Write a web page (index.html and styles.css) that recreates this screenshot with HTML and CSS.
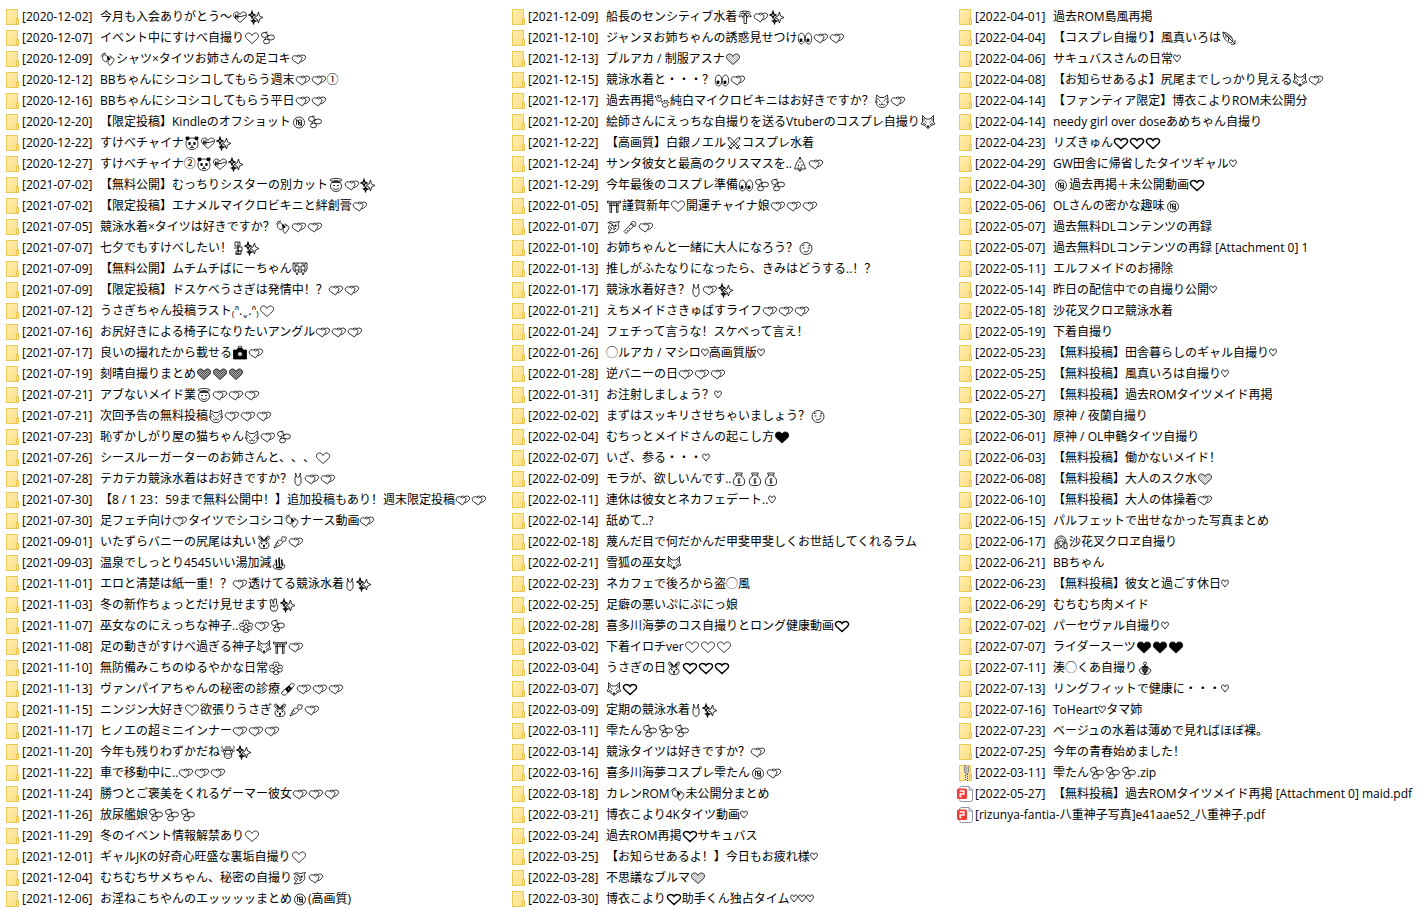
FILE: index.html
```html
<!DOCTYPE html>
<html lang="zh-CN">
<head>
    <meta charset="UTF-8">
    <meta name="viewport" content="width=device-width, initial-scale=1.0">
    <title>Files</title>
    <link rel="stylesheet" href="styles.css">
</head>
<body>
    <!-- Icon shapes used by the list -->
    <svg class="sprite" aria-hidden="true">
        <defs>
            <linearGradient id="paper" x1="0" y1="0" x2="1" y2="1">
                <stop offset="0" stop-color="#ffeeb0"/>
                <stop offset="1" stop-color="#fddf85"/>
            </linearGradient>
            <pattern id="hatch-dark" width="2" height="2" patternUnits="userSpaceOnUse">
                <rect width="2" height="2" fill="#aaa"/>
                <rect width="1" height="1" fill="#555"/>
                <rect x="1" y="1" width="1" height="1" fill="#555"/>
            </pattern>
            <pattern id="hatch-light" width="2" height="2" patternUnits="userSpaceOnUse">
                <rect width="2" height="2" fill="#eee"/>
                <rect width="1" height="1" fill="#bbb"/>
                <rect x="1" y="1" width="1" height="1" fill="#bbb"/>
            </pattern>
        </defs>

        <!-- File types -->
        <symbol id="folder" viewBox="0 0 16 16">
            <rect x="2.5" y=".5" width="11" height="15" fill="url(#paper)" stroke="#ecca58"/>
            <path d="M12.5 9.5h2v6h-2z" fill="#ffe697" stroke="#e9c450"/>
        </symbol>
        <symbol id="zip" viewBox="0 0 16 16">
            <rect x="2.5" y=".5" width="11" height="15" fill="url(#paper)" stroke="#ecca58"/>
            <path d="M12.5 9.5h2v6h-2z" fill="#ffe697" stroke="#e9c450"/>
            <rect x="8" y="0" width="3" height="16" fill="#ddd"/>
            <path d="M8.5 0v16M10.500 1v15" stroke="#555" stroke-dasharray="1 1"/>
            <path d="M7.500 1v6.500l2 2 2-2V1" fill="#bbb" stroke="#888"/>
        </symbol>
        <symbol id="pdf" viewBox="0 0 16 16">
            <path d="M2.5 3V2.5a2 2 0 0 1 2-2H12L15.500 4v9.500a2 2 0 0 1-2 2H4.500a2 2 0 0 1-2-2V13" fill="#fff" stroke="#8f97a8"/>
            <path d="M12 .5V4h3.500" fill="none" stroke="#8f97a8"/>
            <rect x="0" y="2.500" width="10" height="10.500" rx="1.500" fill="#ee3b36"/>
            <path d="M2.500 5h4.500v3H3v2.500h1.500" fill="none" stroke="#fff" stroke-width="1.300"/>
        </symbol>

        <!-- Emoji -->
        <symbol id="two-hearts" viewBox="0 0 16 16"><path d="M7.500 13 2.500 9.800C0 7.500 1.500 4.500 4.200 4.800 6 5 7 5.500 7.500 6.200 8.500 5 10.500 5.200 11 6.800 11.300 8.500 9 10.500 7.500 13ZM6 4.800C7.500 3.800 9 4 9.800 4.600 11.500 3.600 14.500 4 14.700 6.200 14.500 8.500 12 10.300 9.500 11"/></symbol>
        <symbol id="heart" viewBox="0 0 16 16"><path d="M8 13.500 2.500 8.500C0 5.500 2.500 3 4.500 3 6.500 3 7.500 4.500 8 5.500 8.500 4.500 9.500 3 11.500 3 13.500 3 16 5.500 13.500 8.500Z"/></symbol>
        <symbol id="growing-heart" viewBox="0 0 16 16"><path stroke-width="1.400" d="M8 13.500 2.500 8.500C0 5.500 2.500 3.500 4.500 3.500 6.500 3.500 7.500 4.500 8 5.500 8.500 4.500 9.500 3.500 11.500 3.500 13.500 3.500 16 5.500 13.500 8.500Z"/></symbol>
        <symbol id="dark-heart" viewBox="0 0 16 16"><path fill="url(#hatch-dark)" d="M8 13.500 2.500 8.500C0 5.500 2.500 3 4.500 3 6.500 3 7.500 4.500 8 5.500 8.500 4.500 9.500 3 11.500 3 13.500 3 16 5.500 13.500 8.500Z"/></symbol>
        <symbol id="light-heart" viewBox="0 0 16 16"><path fill="url(#hatch-light)" d="M8 13.500 2.500 8.500C0 5.500 2.500 3 4.500 3 6.500 3 7.500 4.500 8 5.500 8.500 4.500 9.500 3 11.500 3 13.500 3 16 5.500 13.500 8.500Z"/></symbol>
        <symbol id="black-heart" viewBox="0 0 16 16"><path fill="currentColor" d="M8 14 2.500 9C0 6 2 3 4.500 3 6.500 3 7.500 4 8 5 8.500 4 9.500 3 11.500 3 14 3 16 6 13.500 9Z"/></symbol>
        <symbol id="small-heart" viewBox="0 0 8 16"><path d="M4 11 .8 7.200C-.2 3.500 3.300 3 4 5.800 4.700 3 8.200 3.500 7.200 7.200Z"/></symbol>
        <symbol id="ribbon-heart" viewBox="0 0 16 16"><path d="M8 13.500 2.500 8.500C0 5.500 2.500 3 4.500 3 6.500 3 7.500 4.500 8 5.500 8.500 4.500 9.500 3 11.500 3 13.500 3 16 5.500 13.500 8.500ZM3 7.500h6L14 6M6 4.500v5.500M6 7.500 3.500 5.500v4z"/></symbol>
        <symbol id="sparkles" viewBox="0 0 16 16"><path d="M10.500 3 11.500 7 15 8.500 11.500 10 10.500 14 9 10 6 8.500 9 7Z"/><path stroke-width="1.200" d="M4 2.500 4.800 5 7 6 4.800 7 4 9 3.200 7 1 6 3.200 5ZM5.500 9.500 6 11.500 8 12 6 13 5.500 14.500 5 13 3.500 12 5 11.500Z"/></symbol>
        <symbol id="drops" viewBox="0 0 16 16"><ellipse cx="4.500" cy="5" rx="3" ry="2.500"/><ellipse cx="11" cy="7.500" rx="3.500" ry="2.500"/><ellipse cx="6.500" cy="11.500" rx="3" ry="2.300"/><path d="M4.500 2.500 7.500 2M7 6.500 9 5.500M4 10 6 8"/></symbol>
        <symbol id="feet" viewBox="0 0 16 16"><path d="M3 5C5 2.500 8 4.500 7.500 7.500 7 10 7 11.500 5 10.500 3 9.500 1.500 7.500 3 5ZM10 7C13 6 15 8 13.500 10 12 12 11.500 14.500 9.500 14 7.500 13 7.500 8 10 7Z"/><path d="M1 5.500 3 3M2.500 3 4 2.500M4 2.500l2-.5M9.500 5l2 .5"/><path stroke-width="1.800" d="M7.500 5.500 9.500 9"/></symbol>
        <symbol id="eighteen" viewBox="0 0 16 16"><circle cx="8" cy="8.500" r="5.500"/><path d="M5.500 6v5M7.500 6h3v5h-3zM7.500 8.500h3M4.500 4.500l7 8"/></symbol>
        <symbol id="panda" viewBox="0 0 16 16"><path fill="currentColor" d="M2 2h3v2.500H2ZM11 2h3v2.500h-3ZM4.800 7.500h1.500v2H4.800ZM9.700 7.500h1.500v2H9.700Z"/><path d="M8 3C3.500 3 2 6 2 9 2 13 5 14.500 8 14.500S14 13 14 9C14 6 12.500 3 8 3ZM7 11h2M8 11v1.500M6 12.500h4"/></symbol>
        <symbol id="halo" viewBox="0 0 16 16"><ellipse cx="8" cy="3" rx="6" ry="1.500"/><circle cx="8" cy="9" r="5.500"/><path d="M4 5.500h8M5 8.500h2M9 8.500h2M5 11c2 2 4 2 6 0"/></symbol>
        <symbol id="bamboo" viewBox="0 0 12 16"><path d="M6 2v13M3 2h5v4H3zM6 7h4v4H6zM2 8h4M4 11h5v3H4zM3 14h6"/></symbol>
        <symbol id="bunnies" viewBox="0 0 16 16"><path d="M2 2 4 5 6 2M10 2 12 5 14 2M3 5h4v4H3zM9 5h4v4H9zM3 9 5 14 7 9M9 9l2 5 2-5M1 2v6l1.500 3M15 2v6l-1.500 3M7 11h2M1 2h14"/></symbol>
        <symbol id="camera" viewBox="0 0 16 16"><path fill="currentColor" d="M1.500 5H5L6 3h4l1 2h3.500v9h-13Z"/><circle cx="8" cy="9" r="2.500" fill="#ccc"/><path d="M6 1l1 1.500M10 1 9 2.500M8 .5V2"/></symbol>
        <symbol id="cat" viewBox="0 0 16 16"><path d="M2.500 2 6 4.500h4L13.500 2 14 8C14 12 11.500 14.500 8 14.500S2 12 2 8ZM4 5v2M12 5v2M5 7l1.500 1.500M11 7 9.500 8.500M5 11l1.500 1L8 11l1.500 1 1.500-1M1 9h3M12 9h3M8 9.500v1"/></symbol>
        <symbol id="swimsuit" viewBox="0 0 12 16"><path d="M3.500 2 4 4.500 3 7v4c0 2 2 3.500 3 3.500s3-1.500 3-3.500V7L8 4.500 8.500 2 7.500 5.500C7 6.500 5 6.500 4.500 5.500Z"/></symbol>
        <symbol id="rabbit" viewBox="0 0 16 16"><path d="M3 2C2 4 4 7 6 7H10C12 7 14 4 13 2 11 2 9 4 8.500 7M3 2C5 2 7 4 7.500 7M6 7C4 8 3 10 3 12 4 14.500 6 14.500 8 14.500S12 14.500 13 12C13 10 12 8 10 7"/><path stroke-width="1.500" d="M5 9.500h1.500M9.500 9.500H11M7 11.500h2M8 12v1.500M4.500 3.500 7 6M11.500 3.500 9 6"/></symbol>
        <symbol id="carrot" viewBox="0 0 16 16"><path d="M2 14 5 8C7 5 10 6 10.500 8 10.500 10 7 12 2 14ZM10 6C9 3 11 1 12 3.500 14 2 15.500 4 13.500 5 15 7 12 8 10.500 7M5 8.500l2 1M4 11l1.500.5"/></symbol>
        <symbol id="hot-spring" viewBox="0 0 16 16"><path d="M4 9C1 10 1 14 8 14.500 15 14 15 10 12 9"/><path stroke-width="1.500" d="M5 11C7 9 4 7 5.500 4.500M8 11.500C10 9 6.500 6 8.500 2.500M11 11C12.500 9 9.500 7 11 4.500M5 12.500h6"/></symbol>
        <symbol id="victory" viewBox="0 0 12 16"><path d="M3 8 2 3 4 2.500 5.500 7 6 2h2.500L8.500 7c2 1 1.500 5-.5 7H4C2 12 2 10 3 8ZM3 9h3v2M6 9l2-1"/></symbol>
        <symbol id="blossom" viewBox="0 0 16 16"><circle cx="8" cy="8.500" r="2"/><path d="M5.500 6C4 2.500 7 1 8 3c1-2 4-.5 2.500 3C14 3.500 16 7 13.500 8.500c2 2-1 5-3 2.500 1 3-1 4.500-2.500 3-1.500 1.500-3.500 0-2.500-3-2 2.500-5-.5-3-2.500C0 7 2 3.500 5.500 6ZM8 4v2.500M13 8l-3 .5M3 8l3 .5M7 10.500 6 13M9 10.500l1 2.500"/></symbol>
        <symbol id="fox" viewBox="0 0 16 16"><path d="M2.500 1.500 6 5h4l3.500-3.500V8l1.500 2-3.500 1.500L8 14.500l-3.500-3L1 10l1.500-2ZM5 7.500l1.500 1M11 7.500l-1.500 1M3 9l3 2M13 9l-3 2M4 4v3M12 4v3"/><path fill="currentColor" d="M7 12h2l-1 1.500Z"/></symbol>
        <symbol id="shrine" viewBox="0 0 16 16"><path d="M1.500 3C5 4 11 4 14.500 3v2h-13ZM3 7.500h10M4 5v9.500h1.500V5M10.500 5v9.500H12V5M8 5v2.500"/></symbol>
        <symbol id="bandage" viewBox="0 0 16 16"><path d="M2 11 11 3C13 1.500 15 3 14 5L6 13.500C4 15 1 14 2 11Z"/><path fill="currentColor" d="M5.500 8 9 5l3 2.500-4 4Z"/><path stroke="#fff" d="M8 7.500l1.500 1"/></symbol>
        <symbol id="cow" viewBox="0 0 16 16"><path d="M2 2C1.500 5 3 6 5 5h6c2 1 3.500 0 3-3M1 6.500 4 8 4.500 12C5 14 6 14.500 8 14.500S11 14 11.500 12L12 8l3-1.500M4 10h8M5.500 7v1.500M10.500 7v1.500M6.500 12h.8M9 12h.8M5 3h6M3 6.500h10"/></symbol>
        <symbol id="shark" viewBox="0 0 16 16"><path d="M1.500 4C4 2 6 3 8 3.500L13.500 2.500 12 5C14 8 12 12 7 13.500L2 14 4.500 11C2 10 2 7 4 6M5 6l3 1v4M8 11l2-2M4 8l2 1-1 1.500M2 3.500l5 2"/><path fill="currentColor" d="M9 6h1.200v1.200H9Z"/></symbol>
        <symbol id="palm" viewBox="0 0 16 16"><path d="M7 6v8.500h2.500V6M8 5.500C5 3.500 2 4.500 2 8L5 6.500 5.500 8.500 8 5.500M8 5.500C11 3.500 14 4.500 14 8L11 6.500 10.500 8.500 8 5.500M8 5C6 1.500 3 2 2.500 4M8 5C10 1.500 13 2 13.500 4M5 2.500 8 2l3 .5"/></symbol>
        <symbol id="eyes" viewBox="0 0 16 16"><ellipse cx="4.500" cy="8.500" rx="3.200" ry="5.500"/><ellipse cx="11.500" cy="8.500" rx="3.200" ry="5.500"/><path fill="currentColor" d="M3 9h2v2.500H3ZM10 9h2v2.500h-2Z"/></symbol>
        <symbol id="paws" viewBox="0 0 16 16"><path d="M2.500 6.500C2.500 4 7 3.500 7.500 6 7.500 8.500 3 9 2.500 6.500ZM8.500 12C8.500 9.500 13.500 9 14 12 13.500 15 8.500 14.500 8.500 12Z"/><path stroke-width="1.500" d="M1.500 4.500V3M4 3.500V2M6.500 3.500V2M8 9.500V8M10.500 8.500V7M13 8.500V7M14.500 10V9"/></symbol>
        <symbol id="swords" viewBox="0 0 16 16"><path d="M2 2.500 4.500 3 13 12 11.500 13.500 2.500 5ZM14 2.500 11.500 3 3 12 4.500 13.500 13.500 5ZM2 10l4 4M14 10l-4 4M2 14.500l1.500-1.500M14 14.500 12.500 13"/></symbol>
        <symbol id="tree" viewBox="0 0 16 16"><path d="M8 2 5 6 3.500 10 2.500 13h11L12.500 10 11 6ZM7 13v2h2v-2"/><path stroke-width="1.500" d="M7.500 6h1M6 9.500h1M9.500 9h1M5.500 12h1M8.500 11.500h1M8 1v2"/></symbol>
        <symbol id="mic" viewBox="0 0 16 16"><path d="M2 12.500 9 5l2.500 2.500L4 14.500ZM9 5C8.500 3 11 1.500 13 3c2 2 0 5-1.500 4.500M9.500 4l3.500 3.500M5 11l1 1M7 9l1 1"/></symbol>
        <symbol id="smirk" viewBox="0 0 16 16"><circle cx="8" cy="8.500" r="6"/><path d="M4 5.500 6.500 5M10 6l2.500-1M4.500 8h2M9.500 8h2.500M6 11.500c2 1 4 0 5-1.500"/></symbol>
        <symbol id="money" viewBox="0 0 16 16"><path d="M4.500 2h7L10 5C13 6.500 14 9 13.500 12 13 14.500 11 14.500 8 14.500S3 14.500 2.500 12C2 9 3 6.500 6 5ZM5.500 4h5M9.500 8C8 7 6.500 8 7 9.500L9 10.500C9.500 12 8 12.500 6.500 11.500M8 7v6"/></symbol>
        <symbol id="leaf" viewBox="0 0 16 16"><path d="M2 2C7 3 11 6 12 11L10 13C5 12 2 8 2 2ZM2 2l12 12M14 10v4l-4 .5M5 5v3M7.500 7.500v3.500M6 4.500 8.500 7h2"/></symbol>
        <symbol id="headphones" viewBox="0 0 16 16"><path d="M3 9C2.500 4 5 2 8 2s5.500 2 5 7M4.500 9C4 5 6 4 8 4s4 1 3.500 5M2 9h3v5.500H2zM11 9h3v5.500h-3zM6 7h4v3.500L8 12l-2-1.500zM6 14.500 8 12l2 2.500"/></symbol>
        <symbol id="anchor" viewBox="0 0 16 16"><path stroke-width="1.500" d="M8 5v9M5 7h6"/><path d="M2 10 5 7.500 5.500 11C6.500 12.500 7 12.500 8 12.500S9.500 12.500 10.500 11L11 7.500 14 10C13 13 11 14.500 8 14.500S3 13 2 10ZM6.500 6v6M9.500 6v6"/><circle cx="8" cy="3.500" r="1.500"/></symbol>
    </svg>

    <main>
        <ul class="file-list" id="fileList"></ul>
    </main>

    <script src="script.js"></script>
</body>
</html>
```
FILE: styles.css
```css
body {
    margin: 0;
    background-color: #fff;
    color: #000;
    font-family: "Open Sans", "Noto Sans CJK SC", "DejaVu Sans", sans-serif;
    font-size: 12px;
    line-height: 21px;
    text-spacing-trim: space-all;
}

.sprite {
    display: block;
    width: 0;
    height: 0;
}

/* List view: fills top to bottom, then starts a new column */
.file-list {
    display: grid;
    grid-template-columns: minmax(0, 506fr) minmax(0, 447fr) minmax(0, 468fr);
    grid-template-rows: repeat(43, 21px);
    grid-auto-flow: column;
    margin: 0;
    padding: 6px 0 0 4px;
    list-style: none;
}

.file {
    display: flex;
    align-items: center;
    white-space: pre;
}

.file-icon {
    flex: none;
    width: 16px;
    height: 16px;
    margin-right: 2px;
}

.file-date {
    flex: none;
    min-width: 78px;
}

/* Symbols inside a file name */
.glyph {
    width: 16px;
    height: 16px;
    vertical-align: -4px;
    fill: none;
    stroke: currentColor;
    stroke-width: 0.8;
}

.glyph.narrow {
    width: 12px;
}

.glyph.tiny {
    width: 8px;
}
```
FILE: script.js
```js
const files = `
[2020-12-02] 今月も入会ありがとう〜💝✨
[2020-12-07] イベント中にすけべ自撮り🤍💦
[2020-12-09] 👣シャツ×タイツお姉さんの足コキ💕
[2020-12-12] BBちゃんにシコシコしてもらう週末💕💕①
[2020-12-16] BBちゃんにシコシコしてもらう平日💕💕
[2020-12-20] 【限定投稿】Kindleのオフショット🔞💦
[2020-12-22] すけべチャイナ🐼💝✨
[2020-12-27] すけべチャイナ②🐼💝✨
[2021-07-02] 【無料公開】むっちりシスターの別カット😇💕✨
[2021-07-02] 【限定投稿】エナメルマイクロビキニと絆創膏💕
[2021-07-05] 競泳水着×タイツは好きですか？👣💕💕
[2021-07-07] 七夕でもすけべしたい！🎋✨
[2021-07-09] 【無料公開】ムチムチばにーちゃん👯
[2021-07-09] 【限定投稿】ドスケベうさぎは発情中！？💕💕
[2021-07-12] うさぎちゃん投稿ラスト₍ᐢ.ˬ.ᐢ₎🤍
[2021-07-16] お尻好きによる椅子になりたいアングル💕💕💕
[2021-07-17] 良いの撮れたから載せる📸💕
[2021-07-19] 刻晴自撮りまとめ💜💜💜
[2021-07-21] アブないメイド業😇💕💕💕
[2021-07-21] 次回予告の無料投稿😼💕💕💕
[2021-07-23] 恥ずかしがり屋の猫ちゃん😼💕💦
[2021-07-26] シースルーガーターのお姉さんと、、、🤍
[2021-07-28] テカテカ競泳水着はお好きですか？🩱💕💕
[2021-07-30] 【8 / 1 23：59まで無料公開中！】追加投稿もあり！週末限定投稿💕💕
[2021-07-30] 足フェチ向け💕タイツでシコシコ👣ナース動画💕
[2021-09-01] いたずらバニーの尻尾は丸い🐰🥕💕
[2021-09-03] 温泉でしっとり4545いい湯加減♨
[2021-11-01] エロと清楚は紙一重！？💕透けてる競泳水着🩱✨
[2021-11-03] 冬の新作ちょっとだけ見せます✌✨
[2021-11-07] 巫女なのにえっちな神子..🌸💕💦
[2021-11-08] 足の動きがすけべ過ぎる神子🦊⛩💕
[2021-11-10] 無防備みこちのゆるやかな日常🌸
[2021-11-13] ヴァンパイアちゃんの秘密の診療🩹💕💕💕
[2021-11-15] ニンジン大好き🤍欲張りうさぎ🐰🥕💕
[2021-11-17] ヒノエの超ミニインナー💕💕💕
[2021-11-20] 今年も残りわずかだね🐮✨
[2021-11-22] 車で移動中に..💕💕💕
[2021-11-24] 勝つとご褒美をくれるゲーマー彼女💕💕💕
[2021-11-26] 放尿艦娘💦💦💦
[2021-11-29] 冬のイベント情報解禁あり🤍
[2021-12-01] ギャルJKの好奇心旺盛な裏垢自撮り🤍
[2021-12-04] むちむちサメちゃん、秘密の自撮り🦈💕
[2021-12-06] お淫ねこちやんのエッッッッまとめ🔞(高画質)
[2021-12-09] 船長のセンシティブ水着🌴💕✨
[2021-12-10] ジャンヌお姉ちゃんの誘惑見せつけ👀💕💕
[2021-12-13] ブルアカ / 制服アスナ💛
[2021-12-15] 競泳水着と・・・？👀💕
[2021-12-17] 過去再掲🐾純白マイクロビキニはお好きですか？😼💕
[2021-12-20] 絵師さんにえっちな自撮りを送るVtuberのコスプレ自撮り🦊
[2021-12-22] 【高画質】白銀ノエル⚔コスプレ水着
[2021-12-24] サンタ彼女と最高のクリスマスを..🎄💕
[2021-12-29] 今年最後のコスプレ準備👀💦💦
[2022-01-05] ⛩謹賀新年🤍開運チャイナ娘💕💕💕
[2022-01-07] 🦈🎤💕
[2022-01-10] お姉ちゃんと一緒に大人になろう？😏
[2022-01-13] 推しがふたなりになったら、きみはどうする..！？
[2022-01-17] 競泳水着好き？🩱💕✨
[2022-01-21] えちメイドさきゅばすライフ💕💕💕
[2022-01-24] フェチって言うな！スケベって言え！
[2022-01-26] ◯ルアカ / マシロ♡高画質版♡
[2022-01-28] 逆バニーの日💕💕💕
[2022-01-31] お注射しましょう？♡
[2022-02-02] まずはスッキリさせちゃいましょう？😏
[2022-02-04] むちっとメイドさんの起こし方🖤
[2022-02-07] いざ、参る・・・♡
[2022-02-09] モラが、欲しいんです..💰💰💰
[2022-02-11] 連休は彼女とネカフェデート..♡
[2022-02-14] 舐めて..?
[2022-02-18] 蔑んだ目で何だかんだ甲斐甲斐しくお世話してくれるラム
[2022-02-21] 雪狐の巫女🦊
[2022-02-23] ネカフェで後ろから盗◯風
[2022-02-25] 足癖の悪いぷにぷにっ娘
[2022-02-28] 喜多川海夢のコス自撮りとロング健康動画💗
[2022-03-02] 下着イロチver🤍🤍🤍
[2022-03-04] うさぎの日🐰💗💗💗
[2022-03-07] 🦊💗
[2022-03-09] 定期の競泳水着🩱✨
[2022-03-11] 雫たん💦💦💦
[2022-03-14] 競泳タイツは好きですか？💕
[2022-03-16] 喜多川海夢コスプレ雫たん🔞💕
[2022-03-18] カレンROM👣未公開分まとめ
[2022-03-21] 博衣こより4Kタイツ動画♡
[2022-03-24] 過去ROM再掲💗サキュバス
[2022-03-25] 【お知らせあるよ！】今日もお疲れ様♡
[2022-03-28] 不思議なブルマ💛
[2022-03-30] 博衣こより💗助手くん独占タイム♡♡♡
[2022-04-01] 過去ROM島風再掲
[2022-04-04] 【コスプレ自撮り】風真いろは🍃
[2022-04-06] サキュバスさんの日常♡
[2022-04-08] 【お知らせあるよ】尻尾までしっかり見える🦊💕
[2022-04-14] 【ファンティア限定】博衣こよりROM未公開分
[2022-04-14] needy girl over doseあめちゃん自撮り
[2022-04-23] リズきゅん💗💗💗
[2022-04-29] GW田舎に帰省したタイツギャル♡
[2022-04-30] 🔞過去再掲＋未公開動画💗
[2022-05-06] OLさんの密かな趣味🔞
[2022-05-07] 過去無料DLコンテンツの再録
[2022-05-07] 過去無料DLコンテンツの再録 [Attachment 0] 1
[2022-05-11] エルフメイドのお掃除
[2022-05-14] 昨日の配信中での自撮り公開♡
[2022-05-18] 沙花叉クロヱ競泳水着
[2022-05-19] 下着自撮り
[2022-05-23] 【無料投稿】田舎暮らしのギャル自撮り♡
[2022-05-25] 【無料投稿】風真いろは自撮り♡
[2022-05-27] 【無料投稿】過去ROMタイツメイド再掲
[2022-05-30] 原神 / 夜蘭自撮り
[2022-06-01] 原神 / OL申鶴タイツ自撮り
[2022-06-03] 【無料投稿】働かないメイド！
[2022-06-08] 【無料投稿】大人のスク水💛
[2022-06-10] 【無料投稿】大人の体操着💕
[2022-06-15] パルフェットで出せなかった写真まとめ
[2022-06-17] 🎧沙花叉クロヱ自撮り
[2022-06-21] BBちゃん
[2022-06-23] 【無料投稿】彼女と過ごす休日♡
[2022-06-29] むちむち肉メイド
[2022-07-02] パーセヴァル自撮り♡
[2022-07-07] ライダースーツ🖤🖤🖤
[2022-07-11] 湊◯くあ自撮り⚓
[2022-07-13] リングフィットで健康に・・・♡
[2022-07-16] ToHeart♡タマ姉
[2022-07-23] ベージュの水着は薄めで見ればほぼ裸。
[2022-07-25] 今年の青春始めました！
[2022-03-11] 雫たん💦💦💦.zip
[2022-05-27] 【無料投稿】過去ROMタイツメイド再掲 [Attachment 0] maid.pdf
[rizunya-fantia-八重神子写真]e41aae52_八重神子.pdf
`.trim().split('\n');

// emoji -> [symbol id, extra class]
const glyphs = {
    '💕': ['two-hearts'],
    '🤍': ['heart'],
    '💗': ['growing-heart'],
    '💜': ['dark-heart'],
    '💛': ['light-heart'],
    '🖤': ['black-heart'],
    '♡': ['small-heart', 'tiny'],
    '💝': ['ribbon-heart'],
    '✨': ['sparkles'],
    '💦': ['drops'],
    '👣': ['feet'],
    '🔞': ['eighteen'],
    '🐼': ['panda'],
    '😇': ['halo'],
    '🎋': ['bamboo', 'narrow'],
    '👯': ['bunnies'],
    '📸': ['camera'],
    '😼': ['cat'],
    '🩱': ['swimsuit', 'narrow'],
    '🐰': ['rabbit'],
    '🥕': ['carrot'],
    '♨': ['hot-spring'],
    '✌': ['victory', 'narrow'],
    '🌸': ['blossom'],
    '🦊': ['fox'],
    '⛩': ['shrine'],
    '🩹': ['bandage'],
    '🐮': ['cow'],
    '🦈': ['shark'],
    '🌴': ['palm'],
    '👀': ['eyes'],
    '🐾': ['paws'],
    '⚔': ['swords'],
    '🎄': ['tree'],
    '🎤': ['mic'],
    '😏': ['smirk'],
    '💰': ['money'],
    '🍃': ['leaf'],
    '🎧': ['headphones'],
    '⚓': ['anchor']
};

const glyphPattern = new RegExp(Object.keys(glyphs).join('|'), 'gu');

function drawGlyph(char) {
    const [id, size = ''] = glyphs[char];
    return `<svg class="glyph ${size}" role="img" aria-label="${char}"><use href="#${id}"/></svg>`;
}

function iconFor(name) {
    if (name.endsWith('.zip')) return 'zip';
    if (name.endsWith('.pdf')) return 'pdf';
    return 'folder';
}

document.getElementById('fileList').innerHTML = files.map(file => {
    const [, date, name] = file.match(/^(\[[\d-]+\] )?(.*)$/);
    return `<li class="file">
        <svg class="file-icon" aria-hidden="true"><use href="#${iconFor(name)}"/></svg>
        ${date ? `<span class="file-date">${date}</span>` : ''}
        <span class="file-name">${name.replace(glyphPattern, drawGlyph)}</span>
    </li>`;
}).join('');
```
